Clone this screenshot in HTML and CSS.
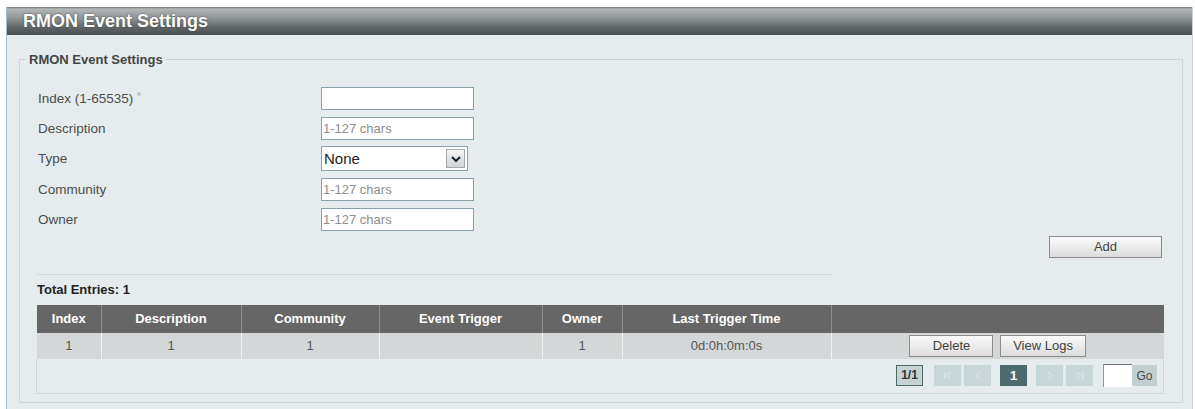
FILE: index.html
```html
<!DOCTYPE html>
<html lang="en">
<head>
  <meta charset="UTF-8" />
  <title>RMON Event Settings</title>
  <link rel="stylesheet" href="styles.css">
</head>
<body>
  <div class="panel">
    <div class="panel-title">RMON Event Settings</div>

    <div class="panel-body">
      <fieldset>
        <legend>RMON Event Settings</legend>
        <div class="fs-body">

          <div class="form-row">
            <label>Index (1-65535) <span class="req">*</span></label>
            <input type="text" />
          </div>
          <div class="form-row">
            <label>Description</label>
            <input type="text" placeholder="1-127 chars" />
          </div>
          <div class="form-row">
            <label>Type</label>
            <div class="select-box">
              <select>
                <option>None</option>
                <option>Log</option>
                <option>Trap</option>
                <option>Log and Trap</option>
              </select>
              <span class="select-arrow">
                <svg width="12" height="10" viewBox="0 0 12 10"><path d="M2 3 L6 7 L10 3" fill="none" stroke="#1f2a33" stroke-width="2.2"/></svg>
              </span>
            </div>
          </div>
          <div class="form-row">
            <label>Community</label>
            <input type="text" placeholder="1-127 chars" />
          </div>
          <div class="form-row">
            <label>Owner</label>
            <input type="text" placeholder="1-127 chars" />
          </div>

          <div class="actions">
            <button class="btn btn-add">Add</button>
          </div>

          <div class="divider"></div>
          <div class="total">Total Entries: 1</div>

          <table class="grid">
            <thead>
              <tr>
                <th class="c-index">Index</th>
                <th class="c-desc">Description</th>
                <th class="c-comm">Community</th>
                <th class="c-trig">Event Trigger</th>
                <th class="c-owner">Owner</th>
                <th class="c-time">Last Trigger Time</th>
                <th></th>
              </tr>
            </thead>
            <tbody>
              <tr>
                <td>1</td>
                <td>1</td>
                <td>1</td>
                <td></td>
                <td>1</td>
                <td>0d:0h:0m:0s</td>
                <td>
                  <button class="btn btn-delete">Delete</button>
                  <button class="btn btn-logs">View Logs</button>
                </td>
              </tr>
            </tbody>
          </table>

          <div class="pager">
            <span class="page-count">1/1</span>
            <span class="page-btn first">
              <svg width="10" height="9" viewBox="0 0 10 9"><path d="M2 1 V8 M8 1 L4 4.5 L8 8" fill="none" stroke="#e2ecee" stroke-width="1"/></svg>
            </span>
            <span class="page-btn prev">
              <svg width="10" height="9" viewBox="0 0 10 9"><path d="M7 1 L3 4.5 L7 8" fill="none" stroke="#e2ecee" stroke-width="1"/></svg>
            </span>
            <span class="page-btn current">1</span>
            <span class="page-btn next">
              <svg width="10" height="9" viewBox="0 0 10 9"><path d="M3 1 L7 4.5 L3 8" fill="none" stroke="#e2ecee" stroke-width="1"/></svg>
            </span>
            <span class="page-btn last">
              <svg width="10" height="9" viewBox="0 0 10 9"><path d="M2 1 L6 4.5 L2 8 M8 1 V8" fill="none" stroke="#e2ecee" stroke-width="1"/></svg>
            </span>
            <input type="text" class="page-input" />
            <button class="page-go">Go</button>
          </div>

        </div>
      </fieldset>
    </div>
  </div>
</body>
</html>
```

FILE: styles.css
```css
* {
  box-sizing: border-box;
}
html, body {
  overflow: hidden;
}
body {
  margin: 0;
  background: #fff;
  font-family: "Liberation Sans", Arial, sans-serif;
  font-size: 13px;
  color: #4a4a4a;
}

/* outer panel */
.panel {
  margin: 7px 2px 0 6px;
  height: 402px;
  background: #e6ecee;
  border-left: 1px solid #9ebfc5;
  border-right: 1px solid #c6d4d7;
}
.panel-title {
  height: 28px;
  padding-left: 16px;
  background: linear-gradient(#6f7577 0, #b3b7b8 2px, #959a9c 35%, #5e6365 75%, #4a4f51 100%);
  color: #fff;
  font-size: 18px;
  font-weight: bold;
  line-height: 28px;
  text-shadow: 0 0 2px #3a3a3a;
}
.panel-body {
  padding: 17px 9px 0 12px;
}

fieldset {
  margin: 0;
  padding: 0;
  border: 1px solid #cbd5d7;
}
legend {
  margin-left: 6px;
  padding: 0 3px;
  font-size: 13px;
  font-weight: bold;
  line-height: 15px;
  color: #444;
}
.fs-body {
  padding: 16px 18px 8px 17px;
}

/* form */
.form-row {
  display: flex;
  align-items: center;
  height: 30.4px;
}
.form-row label {
  width: 284px;
  padding-left: 1px;
  font-size: 13.5px;
  color: #4c4c4c;
}
.req {
  color: #aaa;
  font-size: 10px;
  vertical-align: top;
}
input {
  width: 153px;
  height: 23px;
  padding: 0 1px;
  border: 1px solid #86a2aa;
  background: #fff;
  font-family: inherit;
  font-size: 13px;
  color: #333;
}
input::placeholder {
  color: #8e8e8e;
}
.select-box {
  display: flex;
  align-items: center;
  width: 147px;
  height: 25px;
  border: 1px solid #86a2aa;
  background: #fff;
  padding-right: 2px;
}
.select-box select {
  flex: 1;
  height: 100%;
  border: none;
  background: transparent;
  appearance: none;
  -webkit-appearance: none;
  padding-left: 2px;
  font-family: inherit;
  font-size: 15px;
  color: #222;
  outline: none;
}
.select-arrow {
  display: flex;
  align-items: center;
  justify-content: center;
  width: 19px;
  height: 19px;
  border: 1px solid #a3a9ad;
  background: linear-gradient(#f6f6f6, #d2d4d6);
}

.actions {
  display: flex;
  justify-content: flex-end;
  margin-top: 1px;
  padding-right: 2px;
}
.btn {
  height: 22px;
  padding: 0;
  border: 1px solid #8c8c8c;
  background: linear-gradient(#fbfbfb, #dcdcdc);
  font-family: inherit;
  font-size: 13px;
  color: #444;
}
.btn-add {
  width: 113px;
}

.divider {
  width: 795px;
  margin-top: 16px;
  border-top: 1px solid #d3dadc;
}
.total {
  margin-top: 7px;
  line-height: 16px;
  font-weight: bold;
  color: #222;
}

/* entries table */
.grid {
  width: 100%;
  margin-top: 7px;
  border-collapse: collapse;
}
.grid th {
  height: 28px;
  padding: 0;
  background: #666;
  border-left: 1px solid #8e8e8e;
  color: #fff;
  font-weight: bold;
  text-align: center;
}
.grid th:first-child,
.grid td:first-child {
  border-left: none;
}
.grid td {
  height: 26px;
  padding: 0;
  background: #d4d7d7;
  border-left: 1px solid #f2f2f2;
  color: #555;
  text-align: center;
}
.c-index { width: 64px; }
.c-desc { width: 140px; }
.c-comm { width: 138px; }
.c-trig { width: 163px; }
.c-owner { width: 80px; }
.c-time { width: 209px; }

.btn-delete {
  width: 84px;
  margin-right: 3px;
}
.btn-logs {
  width: 86px;
}

/* pagination */
.pager {
  display: flex;
  justify-content: flex-end;
  align-items: center;
  height: 35px;
  padding-right: 6px;
  border: 1px solid #d0d8da;
  border-top: none;
  margin-left: -1px;
}
.page-count {
  width: 27px;
  height: 21px;
  margin-right: 11px;
  border: 1px solid #4f6667;
  background: #c6d3d3;
  color: #2b3838;
  font-weight: bold;
  font-size: 12px;
  line-height: 19px;
  text-align: center;
}
.page-btn {
  display: flex;
  align-items: center;
  justify-content: center;
  width: 27px;
  height: 21px;
  background: #c7d7d9;
}
.page-btn.first,
.page-btn.next {
  margin-right: 3px;
}
.page-btn.prev,
.page-btn.current {
  margin-right: 9px;
}
.page-btn.current {
  background: #4d6a6e;
  color: #fff;
  font-weight: bold;
  font-size: 13px;
}
.page-btn.last {
  margin-right: 10px;
}
.page-input {
  width: 29px;
  height: 23px;
  border: none;
  border-top: 1px solid #777;
  border-left: 1px solid #999;
}
.page-go {
  width: 25px;
  height: 21px;
  padding: 0;
  border: none;
  background: #c2cecf;
  font-family: inherit;
  font-size: 12px;
  color: #4a4a4a;
}
```
